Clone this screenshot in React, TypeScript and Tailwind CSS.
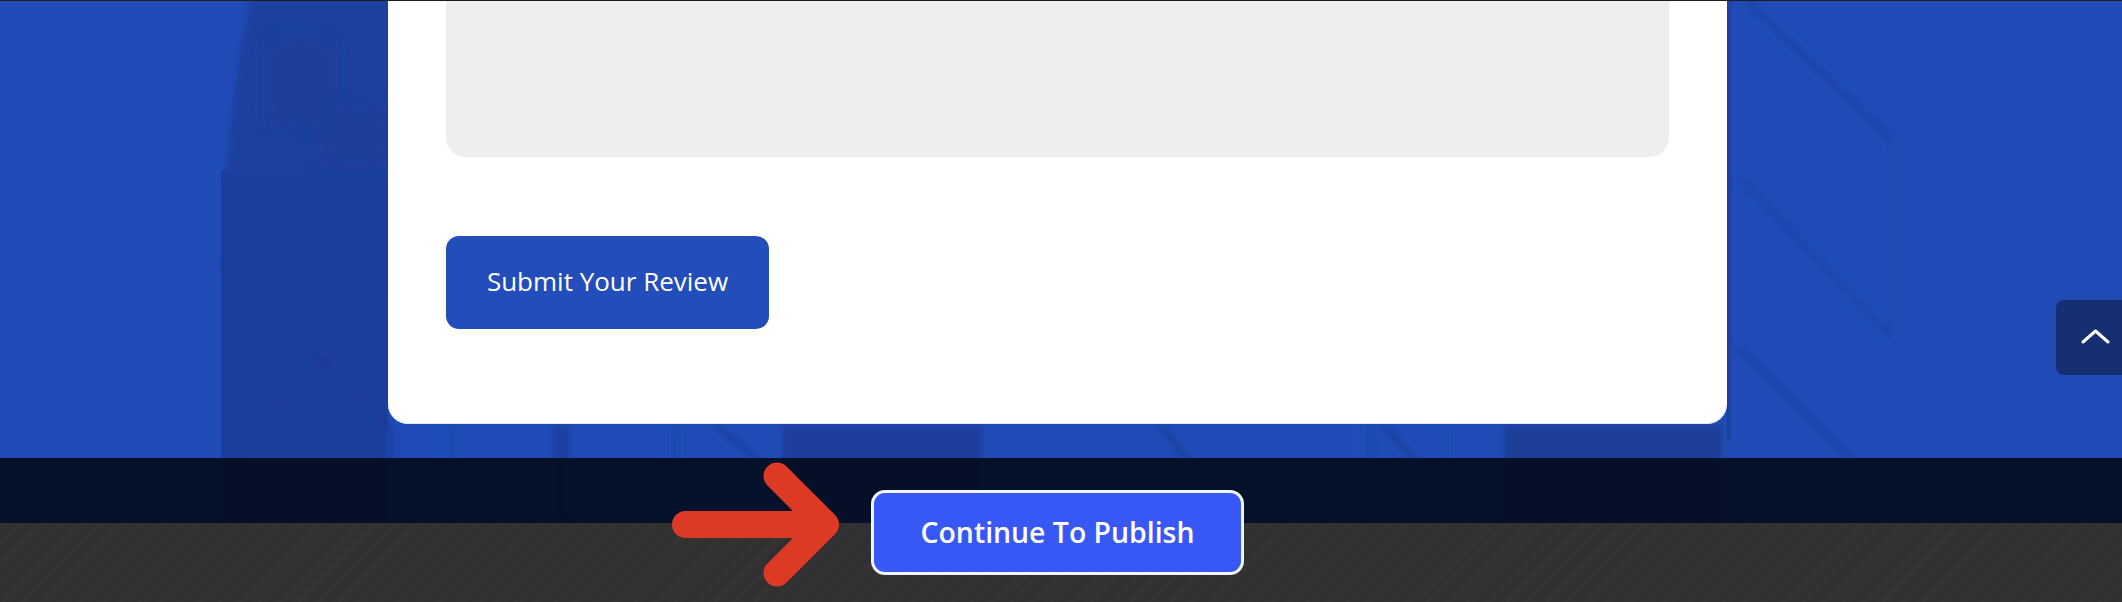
const font = "font-['Open_Sans','Noto_Sans',sans-serif]";

function BuildingBackdrop() {
  return (
    <svg
      className="absolute inset-0 h-full w-full"
      viewBox="0 0 2122 522"
      preserveAspectRatio="none"
      aria-hidden="true"
    >
      <defs>
        <filter id="soft" x="-20%" y="-20%" width="140%" height="140%">
          <feGaussianBlur stdDeviation="3" />
        </filter>
        <filter id="softer" x="-30%" y="-30%" width="160%" height="160%">
          <feGaussianBlur stdDeviation="10" />
        </filter>
        <linearGradient id="cardEdge" x1="0" y1="0" x2="1" y2="0">
          <stop offset="0" stopColor="#1a3d99" />
          <stop offset="1" stopColor="#214cb8" />
        </linearGradient>
      </defs>

      {/* left tower */}
      <polygon points="252,-10 238,60 224,180 400,180 400,-10" fill="#1b3f9e" filter="url(#soft)" />
      <rect x="221" y="170" width="167" height="352" fill="#1b3f9e" />
      <g fill="#1a3c98" filter="url(#softer)">
        <rect x="270" y="40" width="60" height="80" />
        <rect x="320" y="110" width="68" height="50" />
      </g>
      <g stroke="#1a3b96" strokeWidth="7" fill="none" filter="url(#soft)">
        <path d="M221 262 L388 425" />
        <path d="M228 455 L388 300" />
      </g>

      {/* strip below the card */}
      <g filter="url(#soft)">
        <rect x="388" y="424" width="6" height="98" fill="#1b3e9e" />
        <rect x="448" y="424" width="8" height="98" fill="#1e46ac" />
        <rect x="552" y="424" width="18" height="98" fill="#1c41a2" />
        <rect x="672" y="424" width="10" height="98" fill="#1f48b0" />
        <rect x="782" y="424" width="200" height="98" fill="#1b3e9c" />
        <rect x="1365" y="424" width="12" height="98" fill="#1f48b0" />
        <rect x="1442" y="424" width="6" height="98" fill="#1f48b0" />
        <rect x="1504" y="424" width="218" height="98" fill="#1a3c98" />
      </g>
      <rect x="1727" y="0" width="7" height="440" fill="url(#cardEdge)" />

      {/* diagonal struts */}
      <g stroke="#1b3e9e" strokeWidth="6" fill="none" filter="url(#soft)">
        <path d="M716 424 L770 470" />
        <path d="M1160 424 L1205 480" />
        <path d="M1383 424 L1425 470" />
      </g>
      <g fill="none" filter="url(#soft)">
        <path d="M1747 0 L1890 138" stroke="#1c41a4" strokeWidth="6" />
        <path d="M1890 138 L1890 340" stroke="#1f47ae" strokeWidth="5" />
        <path d="M1740 177 L1890 335" stroke="#1d43a8" strokeWidth="6" />
        <path d="M1738 346 L1860 468" stroke="#1c41a4" strokeWidth="6" />
      </g>
    </svg>
  );
}

function ScrollTop() {
  return (
    <div className="absolute right-0 top-[300px] flex h-[75px] w-[66px] items-start rounded-l-lg bg-[#162e72]">
      <svg className="ml-[25px] mt-[28px] h-[16px] w-[29px]" viewBox="0 0 29 16" fill="none" aria-hidden="true">
        <path d="M2 14 L14.5 3 L27 14" stroke="#fff" strokeWidth="3" strokeLinecap="round" strokeLinejoin="round" />
      </svg>
    </div>
  );
}

export default function App() {
  return (
    <div className={`relative h-[602px] w-[2122px] overflow-hidden bg-[#333] ${font}`}>
      <div className="h-px bg-[#1c1c1c]" />
      <div className="relative h-[522px] bg-[#214cb8]">
        <BuildingBackdrop />
        <div className="relative h-[457px]">
          <div className="ml-[388px] h-[423px] w-[1339px] rounded-b-[20px] border-b border-[#e6e8ee] bg-white px-[58px]">
            <div className="h-[156px] rounded-b-[20px] bg-[#eeeeee]" />
            <button
              type="button"
              className="mt-[79px] flex h-[93px] w-[323px] items-center justify-center rounded-[13px] bg-[#234dba] pb-[2px] text-[26px] text-white"
            >
              Submit Your Review
            </button>
          </div>
        </div>
        <div className="relative h-[65px] bg-[#040e22]/95" />
      </div>
      <div className="h-[79px] bg-[repeating-linear-gradient(135deg,#343434_0px,#323232_4px,#2f2f2f_9px,#323232_14px)]" />

      <ScrollTop />

      {/* publish bar, sits across the navy band and the footer */}
      <div className="absolute left-[672px] top-[462px] flex items-center">
        <svg className="h-[125px] w-[168px]" viewBox="0 0 168 125" fill="none" aria-hidden="true">
          <path
            d="M13.5 62.5 H150 M105 14 L153.5 62.5 L105 111"
            stroke="#dd3a26"
            strokeWidth="27"
            strokeLinecap="round"
            strokeLinejoin="round"
          />
        </svg>
        <button
          type="button"
          className="ml-[31px] mt-[16px] flex h-[85px] w-[373px] items-center justify-center rounded-[14px] border-[3px] border-[#f2f4fb] bg-[#3858f6] text-[28.4px] font-semibold text-white"
        >
          Continue To Publish
        </button>
      </div>
    </div>
  );
}
